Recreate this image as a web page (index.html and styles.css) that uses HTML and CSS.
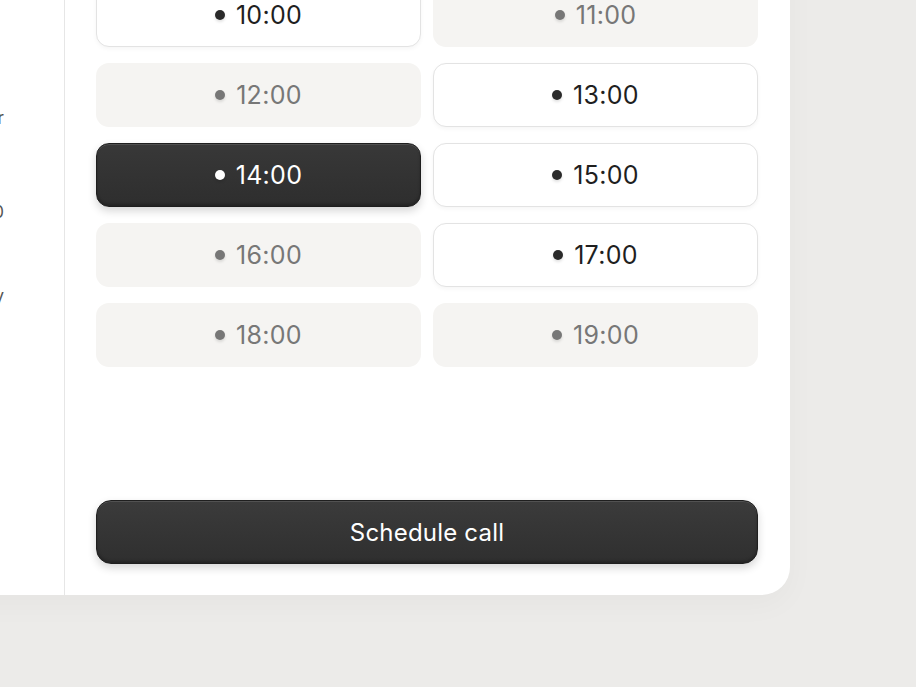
FILE: index.html
```html
<!DOCTYPE html>
<html lang="en">
<head>
<meta charset="utf-8">
<title>Schedule call</title>
<link rel="stylesheet" href="styles.css">
</head>
<body>
<div class="page">
  <div class="card">
    <aside class="info">
      <p class="info-line l1">Alex Carter</p>
      <p class="info-line l2">Mon, 14 Apr 2030</p>
      <p class="info-line l3">Every day</p>
    </aside>
    <section class="panel">
      <div class="slots">
        <button class="slot open"><span class="dot"></span>10:00</button>
        <button class="slot taken"><span class="dot"></span>11:00</button>
        <button class="slot taken"><span class="dot"></span>12:00</button>
        <button class="slot open"><span class="dot"></span>13:00</button>
        <button class="slot selected"><span class="dot"></span>14:00</button>
        <button class="slot open"><span class="dot"></span>15:00</button>
        <button class="slot taken"><span class="dot"></span>16:00</button>
        <button class="slot open"><span class="dot"></span>17:00</button>
        <button class="slot taken"><span class="dot"></span>18:00</button>
        <button class="slot taken"><span class="dot"></span>19:00</button>
      </div>
      <button class="cta">Schedule call</button>
    </section>
  </div>
</div>
</body>
</html>
```
FILE: styles.css
```css
* { box-sizing: border-box; }
html, body { margin: 0; padding: 0; }
body {
  background: #ecebe9;
  font-family: "Inter", "Noto Sans", sans-serif;
  overflow: hidden;
  height: 687px;
}
.page {
  width: 916px;
  height: 687px;
  overflow: hidden;
}
.card {
  display: flex;
  width: 1090px;
  margin-left: -300px;
  margin-top: -120px;
  background: #ffffff;
  border-radius: 0 28px 28px 0;
  box-shadow: 0 10px 30px rgba(0, 0, 0, 0.03);
}
.info {
  width: 364px;
  padding: 0 60px 0 0;
  display: flex;
  flex-direction: column;
  align-items: flex-end;
}
.info-line {
  margin: 0;
  font-size: 17px;
  color: #555;
  white-space: nowrap;
}
.l1 { margin-top: 228px; }
.l2 { margin-top: 74px; }
.l3 { margin-top: 64px; }
.panel {
  width: 726px;
  border-left: 1px solid #e6e6e6;
  padding: 103px 32px 31px 31px;
  display: flex;
  flex-direction: column;
}
.slots {
  display: grid;
  grid-template-columns: 1fr 1fr;
  column-gap: 12px;
  row-gap: 16px;
}
.slot {
  height: 64px;
  border-radius: 13px;
  font-family: inherit;
  font-size: 25px;
  display: flex;
  align-items: center;
  justify-content: center;
  gap: 11px;
  padding: 0;
  letter-spacing: 0.3px;
}
.dot {
  width: 10px;
  height: 10px;
  border-radius: 50%;
  display: block;
  box-shadow: 0 2px 3px rgba(0, 0, 0, 0.12);
}
.open {
  background: #ffffff;
  border: 1.5px solid #e3e3e3;
  color: #1f1f1f;
  box-shadow: 0 2px 4px rgba(0, 0, 0, 0.04);
}
.open .dot { background: #2a2a2a; }
.taken {
  background: #f5f4f2;
  border: none;
  color: #777777;
}
.taken .dot { background: #777777; }
.selected {
  background: linear-gradient(#383838, #2e2e2e);
  border: 1px solid #1e1e1e;
  color: #ffffff;
  box-shadow: inset 0 1px 0 rgba(255, 255, 255, 0.12), inset 0 -2px 3px rgba(0, 0, 0, 0.25), 0 4px 8px rgba(0, 0, 0, 0.16);
}
.selected .dot { background: #ffffff; }
.cta {
  margin-top: 133px;
  height: 64px;
  border-radius: 15px;
  background: linear-gradient(#3b3b3b, #2f2f2f);
  border: 1px solid #1f1f1f;
  color: #ffffff;
  font-family: inherit;
  font-size: 24px;
  letter-spacing: 0.2px;
  box-shadow: inset 0 1px 0 rgba(255, 255, 255, 0.12), inset 0 -2px 3px rgba(0, 0, 0, 0.25), 0 4px 8px rgba(0, 0, 0, 0.16);
}
```
